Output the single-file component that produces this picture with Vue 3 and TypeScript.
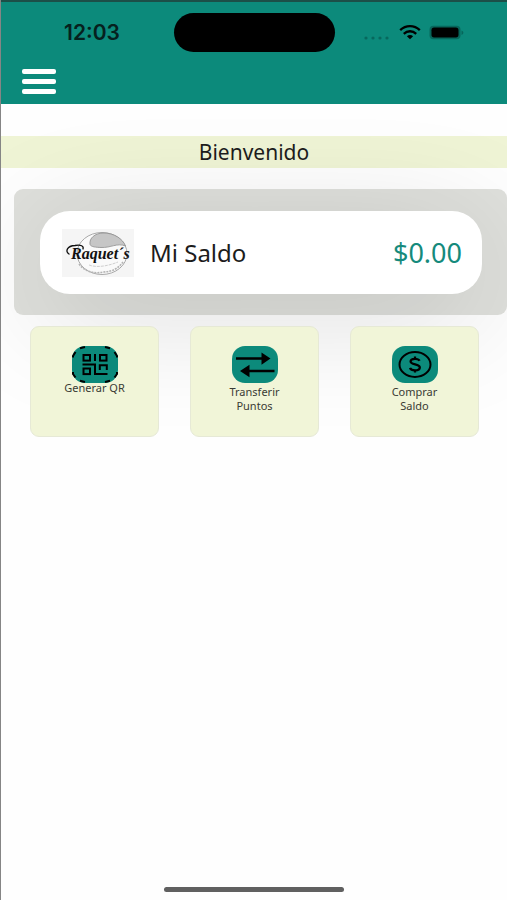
<script setup lang="ts">
import { ref } from 'vue'

interface Action {
  id: string
  lines: string[]
}

const time = ref('12:03')
const balance = ref(0)
const actions: Action[] = [
  { id: 'qr', lines: ['Generar QR'] },
  { id: 'transfer', lines: ['Transferir', 'Puntos'] },
  { id: 'buy', lines: ['Comprar', 'Saldo'] },
]
</script>

<template>
  <div class="screen">
    <header class="header">
      <div class="status">
        <div class="time">{{ time }}</div>
        <div class="island"></div>
        <div class="indicators">
          <svg class="signal" width="28" height="20" viewBox="0 0 28 20" aria-hidden="true">
            <g fill="#07685d">
              <circle cx="3" cy="15" r="1.6" />
              <circle cx="10" cy="15" r="1.6" />
              <circle cx="17" cy="15" r="1.6" />
              <circle cx="24" cy="15" r="1.6" />
            </g>
          </svg>
          <svg width="22" height="20" viewBox="0 0 22 20" aria-hidden="true">
            <g fill="none" stroke="#000" stroke-width="2.3">
              <path d="M1.2 7.2C6.8 1.8 15.2 1.8 20.8 7.2" />
              <path d="M4.8 10.8C8.4 7.4 13.6 7.4 17.2 10.8" />
            </g>
            <path d="M7.9 13.2C9.7 11.7 12.3 11.7 14.1 13.2L11 16.3Z" fill="#000" />
          </svg>
          <svg width="36" height="20" viewBox="0 0 36 20" aria-hidden="true">
            <rect x="0.5" y="2.7" width="31" height="13.6" rx="4" fill="#07665b" />
            <rect x="2.5" y="4.6" width="27" height="9.8" rx="2.6" fill="#000" />
            <path d="M32.5 7.5C35 8.3 35 11.1 32.5 11.9Z" fill="#07665b" />
          </svg>
        </div>
      </div>
      <button class="menu" type="button" aria-label="Menu">
        <span></span><span></span><span></span>
      </button>
    </header>

    <main>
      <h1 class="welcome">Bienvenido</h1>

      <section class="panel">
        <div class="card">
          <svg class="logo" viewBox="0 0 72 48" role="img" aria-label="Raquet´s">
            <rect width="72" height="48" fill="#f5f5f5" />
            <ellipse cx="40" cy="24.5" rx="25" ry="21" fill="#fafafa" stroke="#a9a9a9" stroke-width="1" />
            <path d="M28 15.5C27 9 33 4.3 41 4C52 3.8 61 10 63.5 17C55 13.5 49 19 39 18.5C34 18.3 29 18 28 15.5Z" fill="#c6c6c6" stroke="#8d8d8d" stroke-width=".8" />
            <path d="M17 35C23 43 33 45 41 43C50 43 57 39 61 33" fill="none" stroke="#b4b4b4" stroke-width="1.6" stroke-dasharray="2 1" />
            <path d="M27 36C35 39 46 37 56 33" fill="none" stroke="#cfcfcf" stroke-width="1" stroke-dasharray="3 1" />
            <path d="M7 25C3 22 5 17 13 16.5C19 15.5 22 17 21 20" fill="none" stroke="#111" stroke-width="1.3" stroke-linecap="round" />
            <text class="logo-text" x="9" y="30">Raquet´s</text>
          </svg>
          <span class="card-title">Mi Saldo</span>
          <span class="amount">${{ balance.toFixed(2) }}</span>
        </div>
      </section>

      <nav class="actions">
        <button v-for="a in actions" :key="a.id" class="tile" type="button">
          <svg v-if="a.id === 'qr'" class="icon" viewBox="0 0 46 37" aria-hidden="true">
            <rect width="46" height="37" rx="13" fill="#0c8a7b" />
            <g fill="none" stroke="#000">
              <path d="M1 11.5V10L3.5 6M8 2.2L13 1M33 1L38 2.2M42.5 6L45 10V11.5M1 26V28L3.5 31.5M8 34.8L13 36M33 36L38 34.8M42.5 31.5L45 28V26" stroke-width="2" />
              <g stroke-width="2">
                <rect x="11.5" y="9" width="6.5" height="5.6" />
                <rect x="28" y="9" width="6.5" height="5.6" />
                <rect x="11.5" y="22.5" width="6.5" height="5.6" />
                <path d="M23 8V15M10.5 18.5H23V28H35.5M27.8 24V19.2H34.8V24" />
              </g>
            </g>
          </svg>
          <svg v-else-if="a.id === 'transfer'" class="icon" viewBox="0 0 46 37" aria-hidden="true">
            <rect width="46" height="37" rx="13" fill="#0c8a7b" />
            <path d="M4 12.5H31M42.5 25H16" stroke="#000" stroke-width="2.6" />
            <path d="M29.5 6.5L38.5 12.5L29.5 18.8ZM17.5 18.8L8 25L17.5 31.2Z" fill="#000" />
          </svg>
          <svg v-else class="icon" viewBox="0 0 46 37" aria-hidden="true">
            <rect width="46" height="37" rx="13" fill="#0c8a7b" />
            <ellipse cx="23" cy="18.5" rx="15.5" ry="12.4" fill="none" stroke="#000" stroke-width="2" />
            <path d="M27.6 14.8C26.8 13.4 25.2 12.8 23 12.8C20.2 12.8 18.6 13.8 18.6 15.5C18.6 19.2 27.8 17.5 27.8 21.4C27.8 23.2 26 24.3 23 24.3C20.4 24.3 18.6 23.5 18 21.8M23 10.4V13M23 24V26.6" fill="none" stroke="#000" stroke-width="2.3" />
          </svg>
          <span class="label" :class="{ multi: a.lines.length > 1 }">
            <span v-for="line in a.lines" :key="line" class="line">{{ line }}</span>
          </span>
        </button>
      </nav>
    </main>

    <div class="home"></div>
  </div>
</template>

<style>
body {
  margin: 0;
  background: #fefefe;
}
</style>

<style scoped>
.screen {
  box-sizing: border-box;
  display: flex;
  flex-direction: column;
  min-height: 100vh;
  overflow: hidden;
  border-left: 1px solid #858585;
  background: #fefefe;
  color: #1c1c1c;
  font-family: "Noto Sans", "Open Sans", sans-serif;
}

.header {
  position: relative;
  z-index: 1;
  box-sizing: border-box;
  height: 104px;
  padding-top: 11px;
  border-top: 2px solid #1c4f48;
  background: #0c8a7b;
}

.status {
  display: grid;
  grid-template-columns: 1fr 161px 1fr;
  align-items: center;
}

.time {
  padding-left: 63px;
  color: #06211e;
  font: 600 21px/24px Inter, sans-serif;
}

.island {
  height: 39px;
  border-radius: 20px;
  background: #000;
}

.indicators {
  display: flex;
  padding-left: 28px;
  gap: 8px;
}

.menu {
  display: flex;
  flex-direction: column;
  gap: 5px;
  width: 34px;
  margin: 17px 0 0 21px;
  padding: 0;
  border: 0;
  background: none;
}

.menu span {
  height: 5px;
  border-radius: 2px;
  background: #fff;
}

.welcome {
  margin: 32px 0 0;
  background: #eff4d5;
  font-size: 21px;
  font-weight: 400;
  line-height: 32px;
  text-align: center;
}

.panel {
  margin: 21px 0 0 13px;
  padding: 22px 25px 21px 26px;
  border-radius: 9px;
  background: #dfe0dc;
}

.card {
  display: flex;
  align-items: center;
  box-sizing: border-box;
  height: 83px;
  padding: 0 20px 0 22px;
  border-radius: 30px;
  background: #fff;
  box-shadow: 0 20px 120px rgba(0, 0, 0, 0.15);
}

.logo {
  width: 72px;
  height: 48px;
}

.logo-text {
  fill: #111;
  font: italic 700 16px "Liberation Serif", serif;
}

.card-title {
  margin-left: 16px;
  font-size: 24px;
  line-height: 32px;
}

.amount {
  margin-left: auto;
  color: #158a7c;
  font-size: 27px;
  line-height: 32px;
}

.actions {
  position: relative;
  display: grid;
  grid-template-columns: repeat(3, 1fr);
  gap: 31px;
  padding: 11px 28px 0 29px;
}

.tile {
  display: flex;
  flex-direction: column;
  align-items: center;
  justify-content: flex-start;
  height: 111px;
  padding: 19px 0 0;
  border: 1px solid #e6e9d6;
  border-radius: 9px;
  background: #f1f5d8;
  color: #3a3b34;
  font-family: inherit;
  font-size: 11px;
  line-height: 14px;
}

.icon {
  width: 46px;
  height: 37px;
}

.label {
  display: flex;
  flex-direction: column;
  margin-top: -2px;
}

.label.multi {
  margin-top: 2px;
}

.home {
  width: 180px;
  height: 5px;
  margin: auto auto 8px;
  border-radius: 3px;
  background: #606060;
}
</style>
